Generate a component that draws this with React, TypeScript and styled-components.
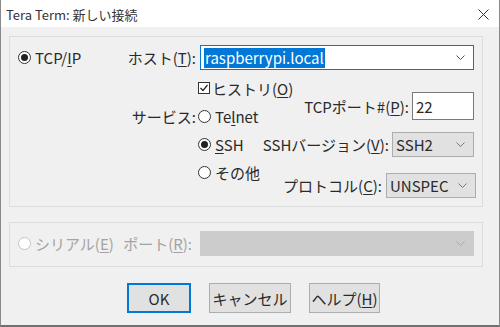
import React from "react";
import styled, { createGlobalStyle } from "styled-components";

const GlobalStyle = createGlobalStyle`
  html, body { margin: 0; padding: 0; background: #f0f0f0; }
  * { box-sizing: border-box; }
`;

const font = `"Noto Sans CJK JP", "Noto Sans", sans-serif`;

const Window = styled.div`
  width: 500px;
  height: 327px;
  display: flex;
  flex-direction: column;
  border-left: 1px solid #8a8a8a;
  border-right: 1px solid #8a8a8a;
  border-bottom: 2px solid #707070;
  font-family: ${font};
  font-size: 15px;
  color: #2a2a2a;
  overflow: hidden;
`;

const TitleBar = styled.div`
  height: 27px;
  flex: none;
  background: #ffffff;
  display: flex;
  align-items: center;
  justify-content: space-between;
  padding: 2px 10px 0 5px;
  font-size: 13px;
  color: #333;
`;

const Body = styled.div`
  flex: 1;
  background: #f0f0f0;
  padding: 9px 0 0 8px;
  display: flex;
  flex-direction: column;
`;

const GroupBox = styled.div<{ $h: number; $mt?: number }>`
  width: 474px;
  height: ${(p) => p.$h}px;
  margin-top: ${(p) => p.$mt ?? 0}px;
  border: 1px solid #dcdcdc;
  padding: 8px 0 0 8px;
  display: grid;
  grid-template-columns: 107px 75px 274px;
  align-content: start;
`;

const Cell = styled.div<{ $h?: number; $right?: boolean; $mt?: number }>`
  height: ${(p) => (p.$h ? `${p.$h}px` : "auto")};
  margin-top: ${(p) => p.$mt ?? 0}px;
  display: flex;
  align-items: center;
  justify-content: ${(p) => (p.$right ? "flex-end" : "flex-start")};
  white-space: nowrap;
`;

const Label = styled.span<{ $disabled?: boolean; $pr?: number }>`
  color: ${(p) => (p.$disabled ? "#a3a3a3" : "#2a2a2a")};
  padding-right: ${(p) => p.$pr ?? 0}px;
  white-space: nowrap;
  line-height: 1;
`;

const U = styled.span`
  text-decoration: underline;
  text-underline-offset: 2px;
`;

const RadioCircle = styled.span<{ $checked?: boolean; $disabled?: boolean }>`
  width: 13px;
  height: 13px;
  flex: none;
  border-radius: 50%;
  border: 1px solid ${(p) => (p.$disabled ? "#c4c4c4" : "#333")};
  background: #fff;
  display: inline-flex;
  align-items: center;
  justify-content: center;
  margin-right: 4px;
  &::after {
    content: "";
    width: 7px;
    height: 7px;
    border-radius: 50%;
    background: ${(p) => (p.$checked ? "#222" : "transparent")};
  }
`;

const CheckBox = styled.span`
  width: 12px;
  height: 12px;
  flex: none;
  border: 1px solid #333;
  background: #fff;
  display: inline-flex;
  align-items: center;
  justify-content: center;
  margin-right: 2px;
`;

const Radio = ({
  checked,
  disabled,
  children,
}: {
  checked?: boolean;
  disabled?: boolean;
  children: React.ReactNode;
}) => (
  <Cell $h={28}>
    <RadioCircle $checked={checked} $disabled={disabled} />
    <Label $disabled={disabled}>{children}</Label>
  </Cell>
);

const Chevron = ({ color = "#777" }: { color?: string }) => (
  <svg width="9" height="5" viewBox="0 0 9 5">
    <polyline points="0.5,0.5 4.5,4.5 8.5,0.5" fill="none" stroke={color} strokeWidth="1" />
  </svg>
);

const Combo = styled.div<{ $w: number; $h?: number; $variant: "edit" | "button" | "disabled" }>`
  width: ${(p) => p.$w}px;
  height: ${(p) => p.$h ?? 25}px;
  display: flex;
  align-items: center;
  justify-content: space-between;
  padding: 0 8px 0 3px;
  border: 1px solid
    ${(p) => (p.$variant === "edit" ? "#0078d7" : p.$variant === "button" ? "#adadad" : "#cccccc")};
  background: ${(p) => (p.$variant === "edit" ? "#ffffff" : p.$variant === "button" ? "#e1e1e1" : "#cccccc")};
  font-size: 15px;
  line-height: 1;
`;

const Selected = styled.span`
  background: #0078d7;
  color: #fff;
  padding: 2px 1px 3px;
`;

const TextBox = styled.div<{ $w: number }>`
  width: ${(p) => p.$w}px;
  height: 28px;
  border: 1px solid #7a7a7a;
  background: #fff;
  display: flex;
  align-items: center;
  padding-left: 3px;
  line-height: 1;
`;

/* radios on the left and the port/version/protocol fields on the right share one cell */
const SubBlock = styled.div`
  display: grid;
  grid-template-areas: "stack";
  margin-top: 4px;
  margin-left: -2px;
`;

const RadioList = styled.div`
  grid-area: stack;
  justify-self: start;
  display: flex;
  flex-direction: column;
`;

const Controls = styled.div`
  grid-area: stack;
  justify-self: end;
  display: flex;
  flex-direction: column;
  align-items: flex-end;
`;

const ControlRow = styled.div<{ $mt: number; $mr?: number }>`
  display: flex;
  align-items: center;
  margin-top: ${(p) => p.$mt}px;
  margin-right: ${(p) => p.$mr ?? 0}px;
`;

const ButtonRow = styled.div`
  display: flex;
  gap: 18px;
  margin-top: 16px;
  padding-left: 118px;
`;

const Button = styled.div<{ $w: number; $default?: boolean }>`
  width: ${(p) => p.$w}px;
  height: 30px;
  background: #e1e1e1;
  border: ${(p) => (p.$default ? "2px solid #0078d7" : "1px solid #adadad")};
  display: flex;
  align-items: center;
  justify-content: center;
  font-size: 15px;
  line-height: 1;
`;

export default function App() {
  return (
    <>
      <GlobalStyle />
      <Window>
        <TitleBar>
          <span>Tera Term: 新しい接続</span>
          <svg width="11" height="11" viewBox="0 0 11 11">
            <path d="M0.5 0.5 L10.5 10.5 M10.5 0.5 L0.5 10.5" stroke="#333" strokeWidth="1" />
          </svg>
        </TitleBar>
        <Body>
          <GroupBox $h={171}>
            <Cell $h={25}>
              <RadioCircle $checked />
              <Label>
                TCP/<U>I</U>P
              </Label>
            </Cell>
            <Cell $h={25} $right>
              <Label $pr={4}>
                ホスト(<U>T</U>):
              </Label>
            </Cell>
            <Cell $h={25}>
              <Combo $w={274} $variant="edit">
                <Selected>raspberrypi.local</Selected>
                <Chevron color="#555" />
              </Combo>
            </Cell>

            <div />
            <Cell $h={28} $mt={32} $right style={{ alignSelf: "start" }}>
              <Label $pr={4}>サービス:</Label>
            </Cell>
            <SubBlock>
              <RadioList>
                <Cell $h={28}>
                  <CheckBox>
                    <svg width="10" height="10" viewBox="0 0 10 10">
                      <polyline points="1.5,5 4,7.5 8.5,2" fill="none" stroke="#222" strokeWidth="1.2" />
                    </svg>
                  </CheckBox>
                  <Label>
                    ヒストリ(<U>O</U>)
                  </Label>
                </Cell>
                <Radio>
                  Te<U>l</U>net
                </Radio>
                <Radio checked>
                  <U>S</U>SH
                </Radio>
                <Radio>その他</Radio>
              </RadioList>
              <Controls>
                <ControlRow $mt={18}>
                  <Label $pr={3}>
                    TCPポート#(<U>P</U>):
                  </Label>
                  <TextBox $w={62}>22</TextBox>
                </ControlRow>
                <ControlRow $mt={12}>
                  <Label $pr={3}>
                    SSHバージョン(<U>V</U>):
                  </Label>
                  <Combo $w={82} $variant="button">
                    <span>SSH2</span>
                    <Chevron />
                  </Combo>
                </ControlRow>
                <ControlRow $mt={16} $mr={-2}>
                  <Label $pr={4}>
                    プロトコル(<U>C</U>):
                  </Label>
                  <Combo $w={90} $variant="button">
                    <span>UNSPEC</span>
                    <Chevron />
                  </Combo>
                </ControlRow>
              </Controls>
            </SubBlock>
          </GroupBox>

          <GroupBox $h={45} $mt={15}>
            <Cell $h={25}>
              <RadioCircle $disabled />
              <Label $disabled>
                シリアル(<U>E</U>)
              </Label>
            </Cell>
            <Cell $h={25} $right>
              <Label $disabled $pr={8}>
                ポート(<U>R</U>):
              </Label>
            </Cell>
            <Cell $h={25}>
              <Combo $w={274} $variant="disabled">
                <span />
                <Chevron color="#a8a8a8" />
              </Combo>
            </Cell>
          </GroupBox>

          <ButtonRow>
            <Button $w={64} $default>
              OK
            </Button>
            <Button $w={82}>キャンセル</Button>
            <Button $w={71}>
              ヘルプ(<U>H</U>)
            </Button>
          </ButtonRow>
        </Body>
      </Window>
    </>
  );
}
